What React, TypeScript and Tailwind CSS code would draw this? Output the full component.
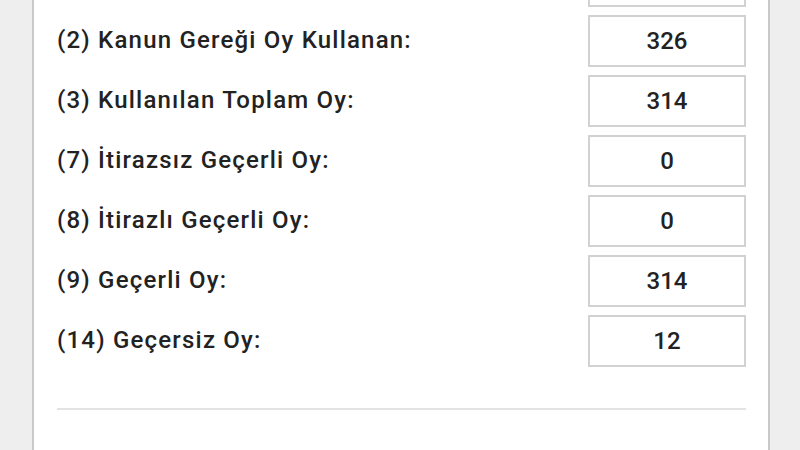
import React from 'react'

type Row = {
  label: string
  value: string
}

const rows: Row[] = [
  { label: '(1) Kayıtlı Seçmen Sayısı:', value: '340' },
  { label: '(2) Kanun Gereği Oy Kullanan:', value: '326' },
  { label: '(3) Kullanılan Toplam Oy:', value: '314' },
  { label: '(7) İtirazsız Geçerli Oy:', value: '0' },
  { label: '(8) İtirazlı Geçerli Oy:', value: '0' },
  { label: '(9) Geçerli Oy:', value: '314' },
  { label: '(14) Geçersiz Oy:', value: '12' },
]

export default function App() {
  return (
    <div
      className="flex h-[450px] w-[800px] overflow-hidden bg-[#eeeeee]"
      style={{ fontFamily: 'Roboto, "Noto Sans", sans-serif' }}
    >
      <div className="w-[32px] shrink-0" />
      <div className="flex w-[738px] shrink-0 flex-col border-x-2 border-[#c9c9c9] bg-white pl-[23px] pr-[22px]">
        <div className="-mt-[45px] flex flex-col gap-[8px]">
          {rows.map((row) => (
            <div key={row.label} className="flex h-[52px] items-center justify-between">
              <span className="-mt-[3px] text-[24px] font-medium leading-none tracking-[1.2px] text-[#222222]">
                {row.label}
              </span>
              <div className="flex h-[52px] w-[158px] items-center justify-center border-2 border-[#d2d2d2] text-[24px] font-medium text-[#222222]">
                {row.value}
              </div>
            </div>
          ))}
        </div>
        <div className="mt-[41px] h-[2px] bg-[#e3e3e3]" />
      </div>
    </div>
  )
}
